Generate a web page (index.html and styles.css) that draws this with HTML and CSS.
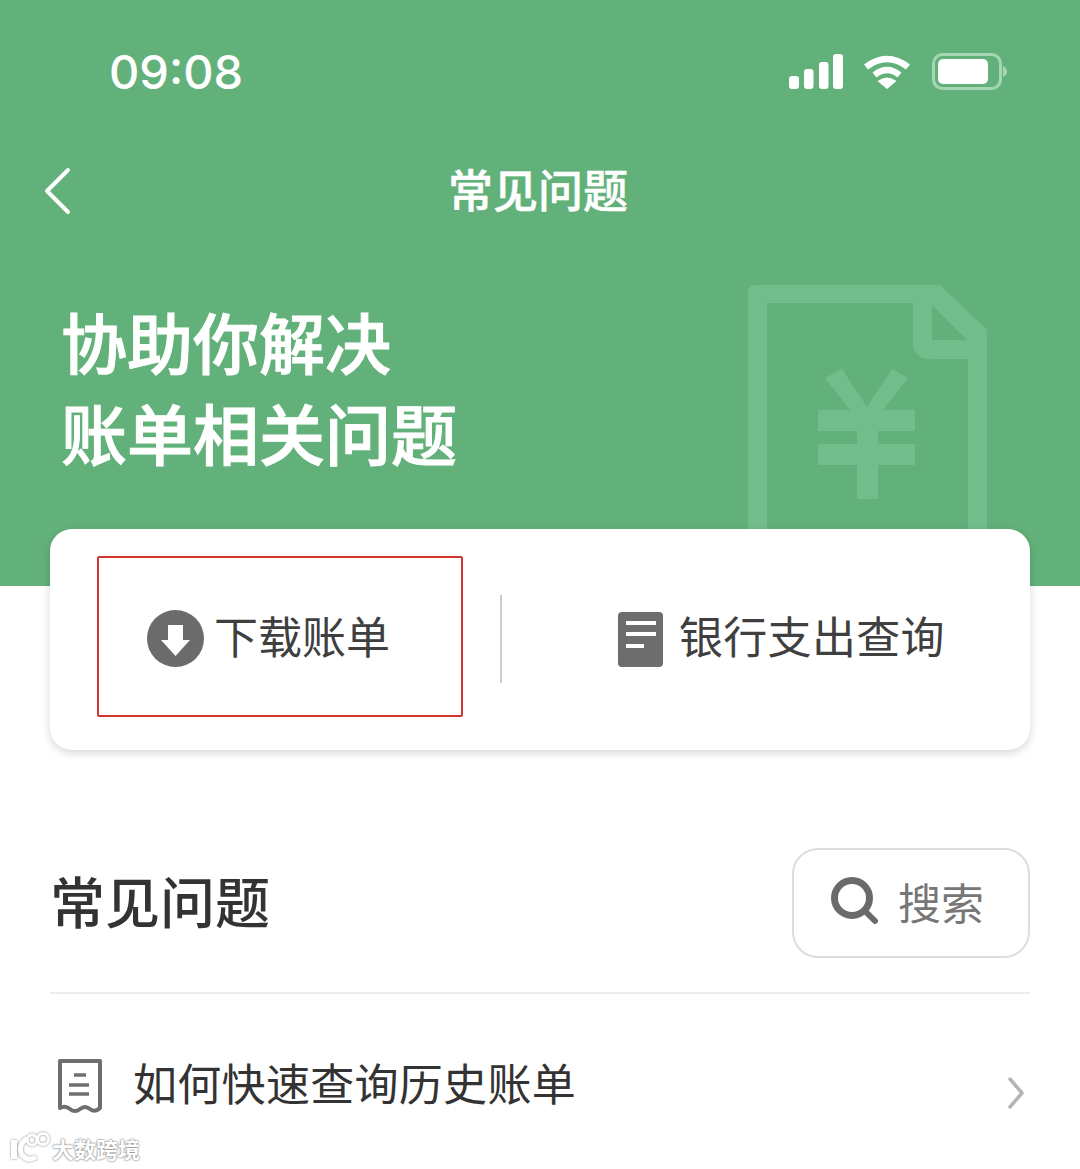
FILE: index.html
```html
<!DOCTYPE html>
<html lang="zh-CN">
<head>
    <meta charset="UTF-8">
    <title>常见问题</title>
    <link rel="stylesheet" href="styles.css">
</head>
<body>
<div class="page">
    <div class="header">
        <!-- 背景账单图标 -->
        <svg class="bg_doc" width="240" height="245" viewBox="0 0 240 245">
            <path fill-rule="evenodd" d="M8 0H192L239 45V245H220V74H183Q165 74 165 56V18H19V245H0V8Q0 0 8 0ZM184 20L219 55H184Z"/>
            <path d="M77 93L94 84L119 122L144 84L160 93L135 125H167V146H130V159H167V180H130V214H109V180H70V159H109V146H70V125H102Z"/>
        </svg>

        <div class="status">
            <div class="time">09:08</div>
            <div class="status_icons">
                <svg width="54" height="35" viewBox="0 0 54 35" fill="#fff">
                    <rect x="0" y="22" width="10" height="13" rx="3"/>
                    <rect x="15" y="15" width="9.500" height="20" rx="3"/>
                    <rect x="30" y="8" width="9.500" height="27" rx="3"/>
                    <rect x="44" y="0" width="10" height="35" rx="3"/>
                </svg>
                <svg class="wifi" width="48" height="35" viewBox="0 0 48 35" fill="none" stroke="#fff" stroke-width="6.500">
                    <path d="M3 13Q24 -3 45 13"/>
                    <path d="M11.500 21Q24 11 36.500 21"/>
                    <path d="M14.500 27L24 35L33.500 27Q24 20 14.500 27Z" fill="#fff" stroke="none"/>
                </svg>
                <svg class="battery" width="76" height="37" viewBox="0 0 76 37">
                    <rect x="1.500" y="1.500" width="67" height="34" rx="9" fill="none" stroke="#a5d6b4" stroke-width="3"/>
                    <rect x="6" y="6" width="50" height="25" rx="5" fill="#fff"/>
                    <path d="M71 13Q75 15 75 18.500Q75 22 71 24Z" fill="#a5d6b4"/>
                </svg>
            </div>
        </div>

        <div class="nav">
            <svg class="back" width="28" height="48" viewBox="0 0 28 48" fill="none" stroke="#fff" stroke-width="4" stroke-linecap="round" stroke-linejoin="round">
                <path d="M24 3L3 24L24 45"/>
            </svg>
            <div class="nav_title">常见问题</div>
        </div>

        <div class="hero">协助你解决<br>账单相关问题</div>
    </div>

    <div class="card">
        <div class="card_left">
            <div class="mark_box">
                <svg width="57" height="57" viewBox="0 0 57 57">
                    <circle cx="28.500" cy="28.500" r="28.500" fill="#6b6b6b"/>
                    <path d="M21 15H36V30H43L28.500 46L14 30H21Z" fill="#fff"/>
                </svg>
                <span>下载账单</span>
            </div>
        </div>
        <div class="card_line"></div>
        <div class="card_right">
            <svg width="45" height="55" viewBox="0 0 45 55">
                <rect width="45" height="55" rx="4" fill="#6d6d6d"/>
                <rect x="8" y="9" width="30" height="4" fill="#fff"/>
                <rect x="8" y="20" width="30" height="4" fill="#fff"/>
                <rect x="8" y="32" width="18" height="4" fill="#fff"/>
            </svg>
            <span>银行支出查询</span>
        </div>
    </div>

    <div class="section_head">
        <div class="section_title">常见问题</div>
        <div class="search_btn">
            <svg width="48" height="48" viewBox="0 0 48 48" fill="none" stroke="#6a6a6a" stroke-width="7" stroke-linecap="round">
                <circle cx="21" cy="21" r="17.500"/>
                <path d="M34 34L44 44" stroke-width="6"/>
            </svg>
            <span>搜索</span>
        </div>
    </div>

    <div class="row">
        <svg class="receipt" width="44" height="56" viewBox="0 0 44 56" fill="none" stroke="#6e6e6e" stroke-width="4" stroke-linejoin="round">
            <path d="M2 49V2H42V49Q37 54 32 50Q27 46 22 50Q17 54 12 50Q7 46 2 49Z"/>
            <path d="M16 16H28M11 26H31M11 35H31" stroke-width="3.500"/>
        </svg>
        <div class="row_text">如何快速查询历史账单</div>
        <svg class="row_arrow" width="18" height="32" viewBox="0 0 18 32" fill="none" stroke="#b5b5b5" stroke-width="3.500" stroke-linecap="round" stroke-linejoin="round">
            <path d="M4 2L16 16L4 30"/>
        </svg>
    </div>

    <!-- 水印 -->
    <div class="watermark">
        <svg width="42" height="32" viewBox="0 0 42 32" fill="none" stroke="#fff" stroke-width="3">
            <path d="M5 8V27" stroke-width="6"/>
            <path d="M18 6Q8 14 13 23Q19 30 27 25" stroke-width="5"/>
            <circle cx="23" cy="8" r="5"/>
            <circle cx="34" cy="7" r="5.500"/>
        </svg>
        <span>大数跨境</span>
    </div>
</div>
</body>
</html>
```

FILE: styles.css
```css
* {
    margin: 0;
    padding: 0;
    box-sizing: border-box;
}

body {
    font-family: "Noto Sans CJK SC", "Noto Sans", sans-serif;
    background-color: #ffffff;
    overflow: hidden;
}

.page {
    width: 1080px;
    height: 1169px;
    position: relative;
    overflow: hidden;
}

.header {
    height: 586px;
    background-color: #63b17a;
    position: relative;
}

.bg_doc {
    position: absolute;
    left: 748px;
    top: 285px;
    fill: #73bd8d;
}

.status {
    height: 143px;
    padding: 44px 72px 0 109px;
    display: flex;
    justify-content: space-between;
    align-items: flex-start;
}

.time {
    font-family: Inter, "Liberation Sans", sans-serif;
    font-size: 47px;
    font-weight: 500;
    line-height: 56px;
    color: #ffffff;
}

.status_icons {
    margin-top: 9px;
    display: flex;
    align-items: center;
}

.wifi {
    margin-left: 20px;
}

.battery {
    margin-left: 21px;
}

.nav {
    height: 96px;
    padding-left: 44px;
    display: flex;
    align-items: center;
    position: relative;
}

.nav_title {
    position: absolute;
    left: 0;
    right: 4px;
    top: 13px;
    text-align: center;
    font-size: 45px;
    font-weight: 500;
    color: #ffffff;
    -webkit-text-stroke: 0.5px #ffffff;
}

.hero {
    padding: 56px 0 0 61px;
    font-size: 66px;
    line-height: 91px;
    font-weight: 500;
    color: #ffffff;
    -webkit-text-stroke: 1px #ffffff;
}

.card {
    height: 221px;
    margin: -57px 50px 0;
    padding-left: 47px;
    background-color: #ffffff;
    border-radius: 22px;
    box-shadow: 0 3px 10px rgba(0, 0, 0, 0.16);
    display: flex;
    align-items: center;
    position: relative;
    font-size: 44px;
    color: #3f3f3f;
}

.card_left {
    width: 366px;
}

.mark_box {
    height: 161px;
    padding-left: 48px;
    border: 2px solid #d3352c;
    border-radius: 2px;
    display: flex;
    align-items: center;
    gap: 10px;
    margin-top: -7px;
}

.mark_box svg {
    margin-top: 4px;
}

.mark_box span {
    margin-bottom: 2px;
}

.card_line {
    width: 2px;
    height: 88px;
    margin-left: 37px;
    margin-top: -1px;
    background-color: #cccccc;
}

.card_right {
    margin-left: 116px;
    margin-top: -9px;
    display: flex;
    align-items: center;
    gap: 16px;
    letter-spacing: 0.3px;
}

.card_right svg {
    margin-top: 8px;
}

.section_head {
    margin: 98px 50px 0;
    height: 146px;
    padding-bottom: 36px;
    border-bottom: 2px solid #ececec;
    display: flex;
    justify-content: space-between;
}

.section_title {
    font-size: 55px;
    font-weight: 500;
    line-height: 102px;
    color: #333333;
}

.search_btn {
    width: 238px;
    height: 110px;
    padding-left: 37px;
    border: 2px solid #dddddd;
    border-radius: 26px;
    display: flex;
    align-items: center;
    gap: 19px;
    font-size: 43px;
    color: #777777;
}

.search_btn svg {
    margin-bottom: 4px;
}

.search_btn span {
    margin-bottom: 4px;
}

.row {
    margin: 56px 50px 0;
    display: flex;
    align-items: center;
}

.receipt {
    margin-left: 8px;
}

.row_text {
    margin-left: 31px;
    margin-bottom: 10px;
    font-size: 44px;
    letter-spacing: 0.3px;
    color: #333333;
    flex: 1;
}

.row_arrow {
    margin-right: 6px;
    margin-top: 12px;
}

.watermark {
    position: absolute;
    left: 9px;
    top: 1132px;
    display: flex;
    align-items: center;
    gap: 1px;
    font-size: 22px;
    font-weight: 700;
    color: #ffffff;
    text-shadow: 0 0 2px #888888, 0 0 2px #888888;
}

.watermark svg {
    filter: drop-shadow(0 0 1px #888888);
}
```
